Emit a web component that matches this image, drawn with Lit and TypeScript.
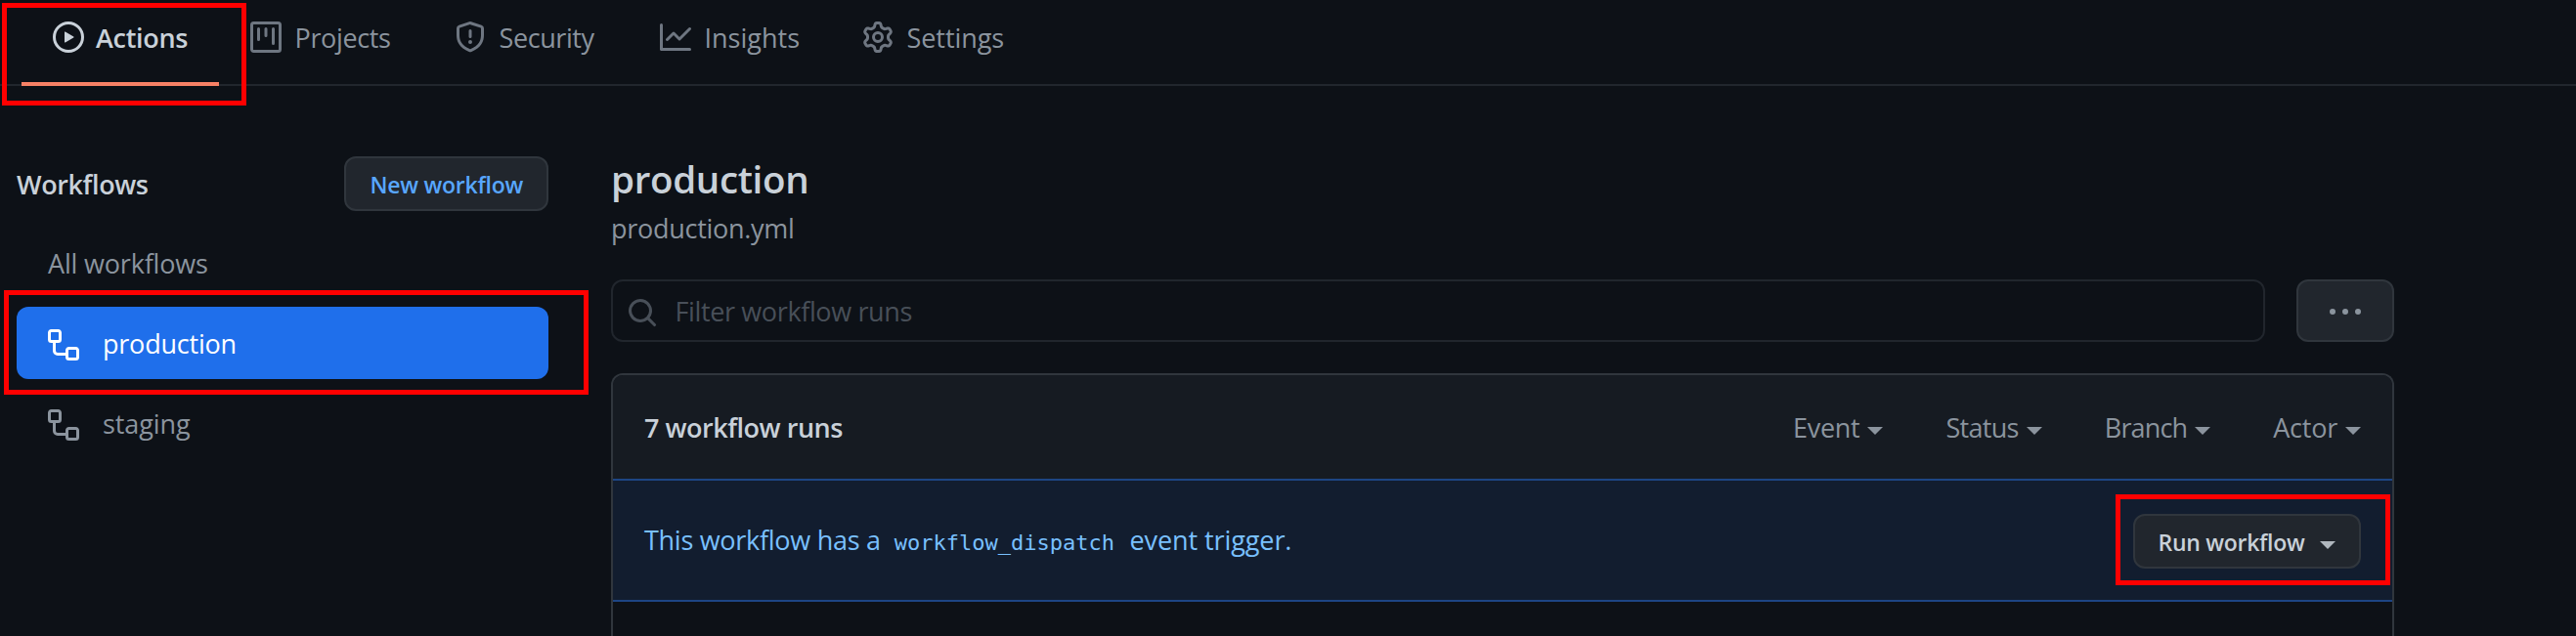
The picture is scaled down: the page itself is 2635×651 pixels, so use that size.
import { LitElement, html, css } from "lit";
import { customElement, property } from "lit/decorators.js";

const ICONS: Record<string, string> = {
  play: "M1.5 8a6.5 6.5 0 1113 0 6.5 6.5 0 01-13 0zM8 0a8 8 0 100 16A8 8 0 008 0zM6.379 5.227A.25.25 0 006 5.442v5.117a.25.25 0 00.379.214l4.264-2.559a.25.25 0 000-.428L6.379 5.227z",
  project:
    "M1.75 0A1.75 1.75 0 000 1.75v12.5C0 15.216.784 16 1.75 16h12.5A1.75 1.75 0 0016 14.25V1.75A1.75 1.75 0 0014.25 0H1.75zM1.5 1.75a.25.25 0 01.25-.25h12.5a.25.25 0 01.25.25v12.5a.25.25 0 01-.25.25H1.75a.25.25 0 01-.25-.25V1.75zM11.75 3a.75.75 0 00-.75.75v7.5a.75.75 0 001.5 0v-7.5a.75.75 0 00-.75-.75zm-8.25.75a.75.75 0 011.5 0v5.5a.75.75 0 01-1.5 0v-5.5zM8 3a.75.75 0 00-.75.75v3.5a.75.75 0 001.5 0v-3.5A.75.75 0 008 3z",
  shield:
    "M7.467.133a1.75 1.75 0 011.066 0l5.25 1.68A1.75 1.75 0 0115 3.48V7c0 1.566-.32 3.182-1.303 4.682-.983 1.498-2.585 2.813-5.032 3.855a1.7 1.7 0 01-1.33 0c-2.447-1.042-4.049-2.357-5.032-3.855C1.32 10.182 1 8.566 1 7V3.48a1.75 1.75 0 011.217-1.667l5.25-1.68zm.61 1.429a.25.25 0 00-.153 0l-5.25 1.68a.25.25 0 00-.174.238V7c0 1.358.275 2.666 1.057 3.86.784 1.194 2.121 2.34 4.366 3.297a.2.2 0 00.154 0c2.245-.956 3.582-2.104 4.366-3.298C13.225 9.666 13.5 8.36 13.5 7V3.48a.25.25 0 00-.174-.237l-5.25-1.68zM9 10.5a1 1 0 11-2 0 1 1 0 012 0zm-.25-5.75a.75.75 0 10-1.5 0v3a.75.75 0 001.5 0v-3z",
  graph:
    "M1.5 1.75a.75.75 0 00-1.5 0v12.5c0 .414.336.75.75.75h14.5a.75.75 0 000-1.5H1.5V1.75zm14.28 2.53a.75.75 0 00-1.06-1.06L10 7.94 7.53 5.47a.75.75 0 00-1.06 0L3.22 8.72a.75.75 0 001.06 1.06L7 7.06l2.47 2.47a.75.75 0 001.06 0l5.25-5.25z",
  gear: "M7.429 1.525a6.593 6.593 0 011.142 0c.036.003.108.036.137.146l.289 1.105c.147.56.55.967.997 1.189.174.086.341.183.501.29.417.278.97.423 1.53.27l1.102-.303c.11-.03.175.016.195.046.219.31.41.641.573.989.014.031.022.11-.059.19l-.815.806c-.411.406-.562.957-.53 1.456a4.588 4.588 0 010 .582c-.032.499.119 1.05.53 1.456l.815.806c.08.08.073.159.059.19a6.494 6.494 0 01-.573.99c-.02.029-.086.074-.195.045l-1.103-.303c-.559-.153-1.112-.008-1.529.27-.16.107-.327.204-.5.29-.449.222-.851.628-.998 1.189l-.289 1.105c-.029.11-.101.143-.137.146a6.613 6.613 0 01-1.142 0c-.036-.003-.108-.037-.137-.146l-.289-1.105c-.147-.56-.55-.967-.997-1.189a4.502 4.502 0 01-.501-.29c-.417-.278-.97-.423-1.53-.27l-1.102.303c-.11.03-.175-.016-.195-.046a6.492 6.492 0 01-.573-.989c-.014-.031-.022-.11.059-.19l.815-.806c.411-.406.562-.957.53-1.456a4.587 4.587 0 010-.582c.032-.499-.119-1.05-.53-1.456l-.815-.806c-.08-.08-.073-.159-.059-.19a6.44 6.44 0 01.573-.99c.02-.029.086-.075.195-.045l1.103.303c.559.153 1.112.008 1.529-.27.16-.107.327-.204.5-.29.449-.222.851-.628.998-1.189l.289-1.105c.029-.11.101-.143.137-.146zM8 0c-.236 0-.47.01-.701.03-.743.065-1.29.615-1.458 1.261l-.29 1.106c-.017.066-.078.158-.211.224a5.994 5.994 0 00-.668.386c-.123.082-.233.09-.3.071L3.27 2.776c-.644-.177-1.392.02-1.82.63a7.977 7.977 0 00-.704 1.217c-.315.675-.111 1.422.363 1.891l.815.806c.05.048.098.147.088.294a6.084 6.084 0 000 .772c.01.147-.038.246-.088.294l-.815.806c-.474.469-.678 1.216-.363 1.891.2.428.436.835.704 1.218.428.609 1.176.806 1.82.63l1.103-.303c.066-.019.176-.011.299.071.213.143.436.272.668.386.133.066.194.158.212.224l.289 1.106c.169.646.715 1.196 1.458 1.26a8.094 8.094 0 001.402 0c.743-.064 1.29-.614 1.458-1.26l.29-1.106c.017-.066.078-.158.211-.224a5.98 5.98 0 00.668-.386c.123-.082.233-.09.3-.071l1.102.302c.644.177 1.392-.02 1.82-.63.268-.382.505-.789.704-1.217.315-.675.111-1.422-.364-1.891l-.814-.806c-.05-.048-.098-.147-.088-.294a6.1 6.1 0 000-.772c-.01-.147.039-.246.088-.294l.814-.806c.475-.469.679-1.216.364-1.891a7.992 7.992 0 00-.704-1.218c-.428-.609-1.176-.806-1.82-.63l-1.103.303c-.066.019-.176.011-.299-.071a5.991 5.991 0 00-.668-.386c-.133-.066-.194-.158-.212-.224L10.16 1.29C9.99.645 9.444.095 8.701.031A8.094 8.094 0 008 0zm1.5 8a1.5 1.5 0 11-3 0 1.5 1.5 0 013 0zM11 8a3 3 0 11-6 0 3 3 0 016 0z",
  workflow:
    "M0 1.75C0 .784.784 0 1.75 0h3.5C6.216 0 7 .784 7 1.75v3.5A1.75 1.75 0 015.25 7H4v4a1 1 0 001 1h4v-1.25C9 9.784 9.784 9 10.75 9h3.5c.966 0 1.75.784 1.75 1.75v3.5A1.75 1.75 0 0114.25 16h-3.5A1.75 1.75 0 019 14.25v-.75H5A2.5 2.5 0 012.5 11V7h-.75A1.75 1.75 0 010 5.25v-3.5zm1.75-.25a.25.25 0 00-.25.25v3.5c0 .138.112.25.25.25h3.5a.25.25 0 00.25-.25v-3.5a.25.25 0 00-.25-.25h-3.5zm9 9a.25.25 0 00-.25.25v3.5c0 .138.112.25.25.25h3.5a.25.25 0 00.25-.25v-3.5a.25.25 0 00-.25-.25h-3.5z",
  search:
    "M11.5 7a4.499 4.499 0 11-8.998 0A4.499 4.499 0 0111.5 7zm-.82 4.74a6 6 0 111.06-1.06l3.04 3.04a.75.75 0 11-1.06 1.06l-3.04-3.04z",
  kebab:
    "M8 9.5a1.5 1.5 0 100-3 1.5 1.5 0 000 3zM1.5 9.5a1.5 1.5 0 100-3 1.5 1.5 0 000 3zm13 0a1.5 1.5 0 100-3 1.5 1.5 0 000 3z",
};

@customElement("octo-icon")
class OctoIcon extends LitElement {
  @property() name = "play";
  static styles = css`
    :host {
      display: block;
      flex: none;
      width: 32px;
      height: 32px;
    }
    svg {
      display: block;
      fill: currentColor;
    }
  `;
  render() {
    return html`<svg width="32" height="32" viewBox="0 0 16 16">
      <path fill-rule="evenodd" d=${ICONS[this.name]}></path>
    </svg>`;
  }
}

const TABS = [
  { id: "actions", label: "Actions", icon: "play" },
  { id: "projects", label: "Projects", icon: "project" },
  { id: "security", label: "Security", icon: "shield" },
  { id: "insights", label: "Insights", icon: "graph" },
  { id: "settings", label: "Settings", icon: "gear" },
];

const FILTERS = ["Event", "Status", "Branch", "Actor"];

@customElement("app-root")
class AppRoot extends LitElement {
  static styles = css`
    :host {
      display: flex;
      flex-direction: column;
      position: relative;
      height: 651px;
      overflow: hidden;
      box-sizing: border-box;
      background: #0d1117;
      color: #c9d1d9;
      font: 400 27px/36px "Open Sans", "Noto Sans", sans-serif;
      white-space: nowrap;
    }
    * {
      box-sizing: border-box;
    }

    .tabs {
      display: flex;
      flex: none;
      height: 88px;
      padding: 0 0 10px 54px;
      border-bottom: 2px solid #21262d;
    }
    .tab {
      display: grid;
      grid-template-columns: 45.5px 1fr;
      align-items: center;
      color: #8b949e;
      position: relative;
    }
    .label {
      padding-top: 2px;
    }
    .tab octo-icon {
      color: #6e7681;
    }
    .tab.actions {
      width: 202px;
      grid-template-columns: 44px 1fr;
      color: #c9d1d9;
      font-weight: 600;
      letter-spacing: -0.3px;
    }
    .tab.actions octo-icon {
      color: #c9d1d9;
    }
    .tab.actions::after {
      content: "";
      position: absolute;
      left: -32px;
      bottom: -12px;
      width: 202px;
      height: 4px;
      background: #f78166;
    }
    .tab.projects {
      width: 209px;
      letter-spacing: -0.35px;
    }
    .tab.security {
      width: 210px;
      letter-spacing: -0.42px;
    }
    .tab.insights {
      width: 207px;
    }
    .tab.settings {
      letter-spacing: -0.06px;
    }

    .page {
      display: grid;
      grid-template-columns: 544px 1824px;
      column-gap: 64px;
      flex: 1;
      min-height: 0;
      padding-left: 17px;
    }

    .side-head {
      display: flex;
      align-items: center;
      justify-content: space-between;
      height: 56px;
      margin: 72px 0 16px;
    }
    .side-title {
      padding-top: 2px;
      font-weight: 600;
      letter-spacing: -0.38px;
    }
    .btn {
      display: flex;
      align-items: center;
      flex: none;
      height: 56px;
      border: 2px solid #30363d;
      border-radius: 12px;
      background: #21262d;
      font-size: 23px;
      font-weight: 600;
    }
    .new {
      width: 209px;
      padding: 2px 0 0 24.5px;
      color: #58a6ff;
      letter-spacing: -0.24px;
    }
    .list {
      display: flex;
      flex-direction: column;
      gap: 8px;
    }
    .item {
      display: flex;
      align-items: center;
      gap: 24px;
      height: 74px;
      padding: 2px 32px 0;
      border-radius: 12px;
      color: #8b949e;
      letter-spacing: -0.1px;
    }
    .item octo-icon {
      margin-top: 2px;
    }
    .item.all {
      letter-spacing: -0.18px;
    }
    .item.active {
      background: #1f6feb;
      color: #fff;
      letter-spacing: -0.22px;
    }

    .main {
      display: flex;
      flex-direction: column;
      min-height: 0;
      padding-top: 65px;
    }
    .title {
      font-size: 38.5px;
      font-weight: 600;
      line-height: 60px;
      letter-spacing: -0.32px;
    }
    .file {
      line-height: 41px;
      color: #8b949e;
      letter-spacing: -0.28px;
    }
    .tools {
      display: flex;
      gap: 32px;
      height: 64px;
      margin: 32px 0;
    }
    .search {
      display: flex;
      align-items: center;
      flex: 1;
      gap: 17.5px;
      padding: 2px 0 0 14px;
      border: 2px solid #21262d;
      border-radius: 12px;
      color: #484f58;
      letter-spacing: -0.37px;
    }
    .search octo-icon {
      margin-top: 2px;
    }
    .more {
      width: 100px;
      height: 64px;
      justify-content: center;
      color: #8b949e;
    }
    .more octo-icon {
      margin-top: 2px;
    }

    .runs {
      flex: 1;
      border: 2px solid #30363d;
      border-bottom: 0;
      border-radius: 12px 12px 0 0;
      overflow: hidden;
    }
    .runs-head {
      display: flex;
      align-items: center;
      justify-content: space-between;
      height: 106px;
      padding: 2px 32px 0;
      background: #161b22;
    }
    .count {
      font-weight: 600;
      letter-spacing: -0.47px;
    }
    .filters {
      display: flex;
      gap: 64px;
      color: #8b949e;
    }
    .filter {
      display: flex;
      align-items: center;
      gap: 8px;
    }
    .filter.event {
      letter-spacing: -0.3px;
    }
    .filter.status {
      letter-spacing: -0.68px;
    }
    .filter.branch {
      letter-spacing: -0.86px;
    }
    .filter.actor {
      letter-spacing: -0.22px;
    }
    .caret {
      border: 8px solid transparent;
      border-top-color: currentColor;
      border-bottom: 0;
      margin-top: 6px;
    }

    .notice {
      display: flex;
      align-items: center;
      justify-content: space-between;
      height: 126px;
      padding: 2px 32px 0;
      border: solid #1d4584;
      border-width: 2px 0;
      background: #121d2f;
    }
    .message {
      display: flex;
      align-items: baseline;
      color: #79c0ff;
      letter-spacing: -0.28px;
    }
    .code {
      margin: 0 15.5px 0 14px;
      font: 22px/36px "DejaVu Sans Mono", monospace;
      letter-spacing: 0;
    }
    .trigger {
      letter-spacing: -0.08px;
    }
    .run {
      width: 233px;
      padding: 2px 24px 0 23.5px;
      justify-content: space-between;
      letter-spacing: -0.28px;
    }
    .run .caret {
      color: #b0b7be;
    }

    .mark {
      position: absolute;
      border: 5px solid #f00;
      pointer-events: none;
    }
    .mark-tab {
      left: 2px;
      top: 3px;
      width: 250px;
      height: 105px;
    }
    .mark-item {
      left: 4px;
      top: 297px;
      width: 598px;
      height: 107px;
    }
    .mark-run {
      left: 2164px;
      top: 506px;
      width: 281px;
      height: 93px;
    }
  `;

  render() {
    return html`
      <nav class="tabs">
        ${TABS.map(
          (t) => html`<div class="tab ${t.id}">
            <octo-icon name=${t.icon}></octo-icon><span class="label">${t.label}</span>
          </div>`
        )}
      </nav>
      <div class="page">
        <aside>
          <div class="side-head">
            <span class="side-title">Workflows</span>
            <div class="btn new">New workflow</div>
          </div>
          <div class="list">
            <div class="item all">All workflows</div>
            <div class="item active">
              <octo-icon name="workflow"></octo-icon><span>production</span>
            </div>
            <div class="item">
              <octo-icon name="workflow"></octo-icon><span>staging</span>
            </div>
          </div>
        </aside>
        <section class="main">
          <div class="title">production</div>
          <div class="file">production.yml</div>
          <div class="tools">
            <div class="search">
              <octo-icon name="search"></octo-icon><span>Filter workflow runs</span>
            </div>
            <div class="btn more"><octo-icon name="kebab"></octo-icon></div>
          </div>
          <div class="runs">
            <div class="runs-head">
              <span class="count">7 workflow runs</span>
              <div class="filters">
                ${FILTERS.map(
                  (f) => html`<div class="filter ${f.toLowerCase()}">
                    <span>${f}</span><i class="caret"></i>
                  </div>`
                )}
              </div>
            </div>
            <div class="notice">
              <div class="message">
                <span>This workflow has a</span>
                <span class="code">workflow_dispatch</span>
                <span class="trigger">event trigger.</span>
              </div>
              <div class="btn run"><span>Run workflow</span><i class="caret"></i></div>
            </div>
          </div>
        </section>
      </div>
      <div class="mark mark-tab"></div>
      <div class="mark mark-item"></div>
      <div class="mark mark-run"></div>
    `;
  }
}
